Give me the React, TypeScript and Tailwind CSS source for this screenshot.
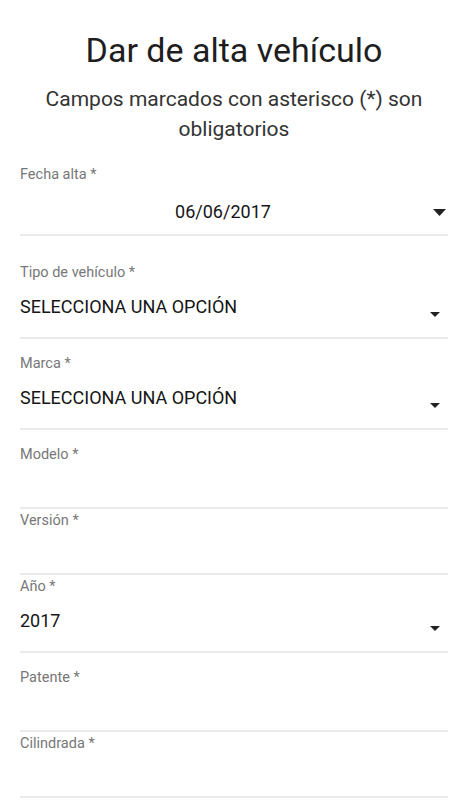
import React from 'react'

const font = { fontFamily: 'Roboto, "Noto Sans", sans-serif' }

function Caret({ big }: { big?: boolean }) {
  return big ? (
    <svg width="13" height="7" viewBox="0 0 13 7" className="block">
      <path d="M0 0 L13 0 L6.5 7 Z" fill="#222" />
    </svg>
  ) : (
    <svg width="10" height="5" viewBox="0 0 10 5" className="block">
      <path d="M0 0 L10 0 L5 5 Z" fill="#222" />
    </svg>
  )
}

function Label({ text }: { text: string }) {
  return <div className="h-[20px] pt-[2px] text-[14.5px] leading-[20px] text-[#777]">{text}</div>
}

function SelectField({ label, value }: { label: string; value: string }) {
  return (
    <div className="mb-[13px]">
      <Label text={label} />
      <div className="flex items-start justify-between h-[58px] pt-[14px] border-b-2 border-[#ebebeb]">
        <span className="text-[18px] leading-[24px] text-[#151515]">{value}</span>
        <span className="mt-[17px] mr-[8px]">
          <Caret />
        </span>
      </div>
    </div>
  )
}

function TextField({ label }: { label: string }) {
  return (
    <div>
      <Label text={label} />
      <div className="h-[46px] border-b-2 border-[#ebebeb]" />
    </div>
  )
}

export default function App() {
  return (
    <div className="min-h-screen bg-white px-5" style={font}>
      <h1 className="pt-[30px] text-center text-[34px] leading-[40px] font-normal text-[#1e1e1e]">
        Dar de alta vehículo
      </h1>
      <p className="mt-[14px] text-center text-[21px] leading-[30px] text-[#333]">
        Campos marcados con asterisco (*) son obligatorios
      </p>

      <div className="mt-[19px] mb-[25px]">
        <Label text="Fecha alta *" />
        <div className="relative flex items-start justify-center h-[53px] pt-[17px] pr-[22px] border-b-2 border-[#ebebeb]">
          <span className="text-[18px] leading-[24px] text-[#151515]">06/06/2017</span>
          <span className="absolute right-[2px] top-[26px]">
            <Caret big />
          </span>
        </div>
      </div>

      <SelectField label="Tipo de vehículo *" value="SELECCIONA UNA OPCIÓN" />
      <SelectField label="Marca *" value="SELECCIONA UNA OPCIÓN" />
      <TextField label="Modelo *" />
      <TextField label="Versión *" />
      <SelectField label="Año *" value="2017" />
      <TextField label="Patente *" />
      <TextField label="Cilindrada *" />
    </div>
  )
}
